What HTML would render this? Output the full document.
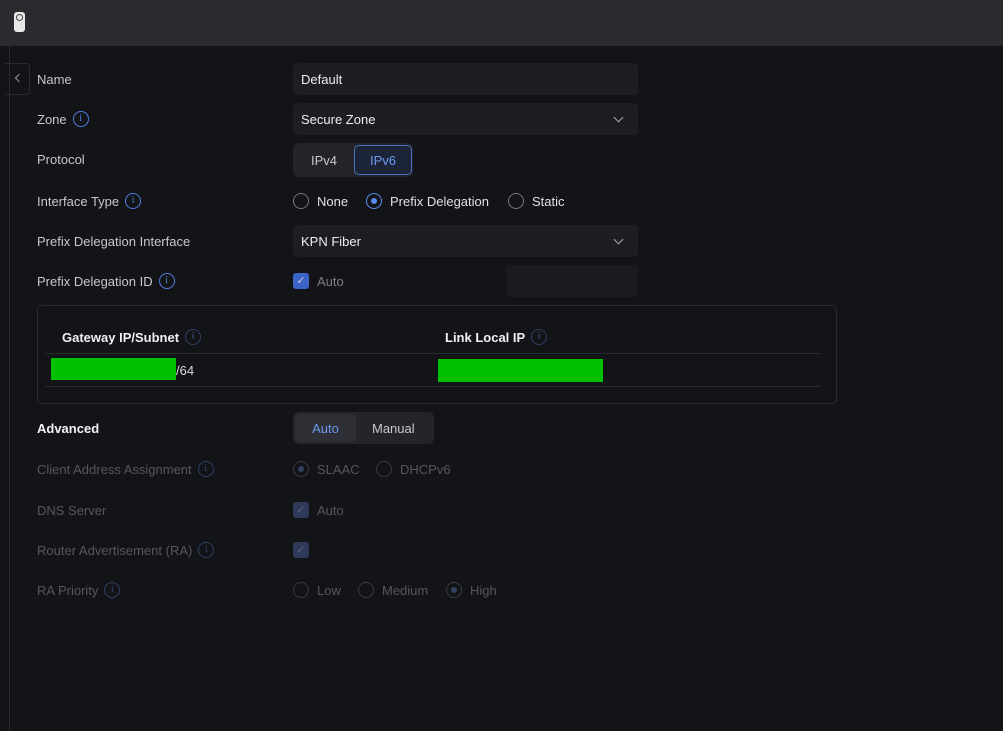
<!DOCTYPE html>
<html><head><style>
*{box-sizing:border-box;margin:0;padding:0}
body{width:1003px;height:731px;background:#131417;font-family:"Liberation Sans",sans-serif;font-size:13px;color:#d8d9dc;position:relative;overflow:hidden}
.a{position:absolute}
.f{display:flex;align-items:center;height:18px;white-space:nowrap}
.top{left:0;top:0;width:1003px;height:46px;background:#2a2b2f}
.lbl{left:37px;color:#c7c8cc;font-size:13px}
.dim{color:#55575c}
.inp{left:293px;width:345px;height:32px;background:#1d1e22;border-radius:4px;color:#eceef0;padding:9px 8px;font-size:13px}
.info{display:inline-block;width:16px;height:16px;border:1.3px solid #4f7fe0;border-radius:50%;color:#4f7fe0;font-size:10px;text-align:center;line-height:14px;margin-left:6px;font-family:"Liberation Serif",serif;flex:none}
.info.d{border-color:#2e3f63;color:#2e3f63}
.rad{display:inline-block;width:16px;height:16px;border:1.3px solid #777;border-radius:50%;margin-right:8px;position:relative;flex:none}
.rad.on{border-color:#5a8cf0}
.rad.on::after{content:"";position:absolute;left:3.7px;top:3.7px;width:6px;height:6px;border-radius:50%;background:#5a8cf0}
.rad.d{border-color:#3a3b3f}
.rad.d.on::after{background:#33415e}
.chk{display:inline-block;width:16px;height:16px;background:#3c63c6;border-radius:3px;margin-right:8px;color:#ccd;font-size:11px;text-align:center;line-height:16px;flex:none}
.chk.d{background:#2e3a58;color:#5a6580}
.chev{position:absolute;right:16px;top:11px;width:7px;height:7px;border-right:1.3px solid #aaa;border-bottom:1.3px solid #aaa;transform:rotate(45deg)}
</style></head><body>
<div class="a top"></div>
<div class="a" style="left:14px;top:12px;width:11px;height:20px;background:#e8e8e8;border-radius:3px"></div>
<div class="a" style="left:16px;top:14px;width:7px;height:7px;border:1.5px solid #444;border-radius:50%"></div>
<div class="a" style="left:9px;top:46px;width:1px;height:685px;background:#2a2b2f"></div>
<div class="a" style="left:5px;top:63px;width:25px;height:32px;border:1px solid #2a2b2f;border-left:none;border-radius:0 4px 4px 0"></div>
<div class="a" style="left:16px;top:75px;width:6px;height:6px;border-left:1.2px solid #999;border-bottom:1.2px solid #999;transform:rotate(45deg)"></div>

<div class="a lbl f" style="top:70px">Name</div>
<div class="a inp" style="top:63px">Default</div>

<div class="a lbl f" style="top:110px">Zone<span class="info">i</span></div>
<div class="a inp" style="top:103px">Secure Zone<span class="chev"></span></div>

<div class="a lbl f" style="top:150px">Protocol</div>
<div class="a" style="left:293px;top:143px;width:120px;height:34px;background:#23252a;border-radius:6px"></div>
<div class="a f" style="left:311px;top:151px;color:#c7c8cc">IPv4</div>
<div class="a" style="left:354px;top:145px;width:58px;height:30px;border:1.3px solid #4a6fc0;background:#1c2438;border-radius:5px;color:#6e98f0;text-align:center;padding-top:7px">IPv6</div>

<div class="a lbl f" style="top:192px">Interface Type<span class="info">i</span></div>
<div class="a f" style="left:293px;top:192px;color:#e0e1e3"><span class="rad"></span>None</div>
<div class="a f" style="left:366px;top:192px;color:#e0e1e3"><span class="rad on"></span>Prefix Delegation</div>
<div class="a f" style="left:508px;top:192px;color:#e0e1e3"><span class="rad"></span>Static</div>

<div class="a lbl f" style="top:232px">Prefix Delegation Interface</div>
<div class="a inp" style="top:225px">KPN Fiber<span class="chev"></span></div>

<div class="a lbl f" style="top:272px">Prefix Delegation ID<span class="info">i</span></div>
<div class="a f" style="left:293px;top:272px;color:#7d7f84"><span class="chk">✓</span>Auto</div>
<div class="a" style="left:506px;top:265px;width:132px;height:32px;background:#1a1b1f;border-radius:4px"></div>

<div class="a" style="left:37px;top:305px;width:800px;height:99px;border:1px solid #2a2b2f;border-radius:5px"></div>
<div class="a f" style="left:62px;top:328px;color:#f0f0f2;font-weight:bold">Gateway IP/Subnet<span class="info d">i</span></div>
<div class="a f" style="left:445px;top:328px;color:#f0f0f2;font-weight:bold">Link Local IP<span class="info d">i</span></div>
<div class="a" style="left:45px;top:353px;width:775px;height:1px;background:#2a2b2f"></div>
<div class="a" style="left:45px;top:386px;width:775px;height:1px;background:#2a2b2f"></div>
<div class="a" style="left:51px;top:358px;width:125px;height:22px;background:#00c000"></div>
<div class="a f" style="left:176px;top:361px;color:#d8d9dc">/64</div>
<div class="a" style="left:438px;top:359px;width:165px;height:23px;background:#00c000"></div>

<div class="a f" style="left:37px;top:419px;color:#f4f4f6;font-weight:bold">Advanced</div>
<div class="a" style="left:293px;top:412px;width:141px;height:32px;background:#23252a;border-radius:6px"></div>
<div class="a" style="left:295px;top:414px;width:61px;height:28px;background:#2e3035;border-radius:5px;color:#6e98f0;text-align:center;padding-top:7px">Auto</div>
<div class="a f" style="left:372px;top:419px;color:#c7c8cc">Manual</div>

<div class="a lbl dim f" style="top:460px">Client Address Assignment<span class="info d">i</span></div>
<div class="a dim f" style="left:293px;top:460px"><span class="rad d on"></span>SLAAC</div>
<div class="a dim f" style="left:376px;top:460px"><span class="rad d"></span>DHCPv6</div>

<div class="a lbl dim f" style="top:501px">DNS Server</div>
<div class="a dim f" style="left:293px;top:501px"><span class="chk d">✓</span>Auto</div>

<div class="a lbl dim f" style="top:541px">Router Advertisement (RA)<span class="info d">i</span></div>
<div class="a dim f" style="left:293px;top:541px"><span class="chk d">✓</span></div>

<div class="a lbl dim f" style="top:581px">RA Priority<span class="info d">i</span></div>
<div class="a dim f" style="left:293px;top:581px"><span class="rad d"></span>Low</div>
<div class="a dim f" style="left:358px;top:581px"><span class="rad d"></span>Medium</div>
<div class="a dim f" style="left:446px;top:581px"><span class="rad d on"></span>High</div>
</body></html>
